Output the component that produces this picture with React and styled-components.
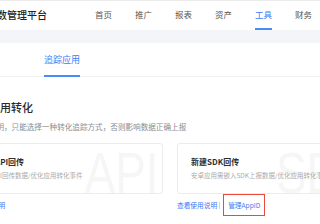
import React from 'react';
import styled, { createGlobalStyle } from 'styled-components';

const GlobalStyle = createGlobalStyle`
  html, body {
    margin: 0;
    padding: 0;
    background: #fff;
    overflow: hidden;
  }
  body {
    font-family: "Noto Sans CJK SC", "Noto Sans", sans-serif;
    color: #333;
  }
`;

const Page = styled.div`
  width: 320px;
  height: 224px;
  overflow: hidden;
`;

const Header = styled.header`
  height: 30px;
  box-sizing: border-box;
  border-top: 1px solid #ececec;
  display: flex;
  align-items: center;
  background: #fff;
`;

const Brand = styled.div`
  margin-left: -3px;
  padding-bottom: 3px;
  font-size: 10px;
  font-weight: 500;
  color: #222;
  white-space: nowrap;
`;

const Nav = styled.nav`
  display: flex;
  gap: 23px;
  margin-left: 48px;
  height: 100%;
`;

const NavItem = styled.div`
  position: relative;
  display: flex;
  align-items: center;
  padding-bottom: 3px;
  box-sizing: border-box;
  font-size: 8.5px;
  white-space: nowrap;
  color: ${(p) => (p.$active ? '#3a7cf6' : '#555')};

  &::after {
    content: '';
    display: ${(p) => (p.$active ? 'block' : 'none')};
    position: absolute;
    left: 0;
    right: 0;
    bottom: 0;
    height: 2px;
    background: #4a8cf7;
  }
`;

const Band = styled.div`
  height: 13px;
  background: #f3f5f8;
`;

const TabBar = styled.div`
  height: 34px;
  box-sizing: border-box;
  display: flex;
  border-bottom: 1px solid #eef0f2;
`;

const Tab = styled.div`
  position: relative;
  margin-left: 44px;
  display: flex;
  align-items: center;
  font-size: 9px;
  color: #3a7cf6;

  &::after {
    content: '';
    position: absolute;
    left: 0;
    right: 0;
    bottom: -1px;
    height: 2px;
    background: #4a8cf7;
  }
`;

const Content = styled.div`
  padding-top: 23px;
`;

const Title = styled.h2`
  margin: 0 0 0 -11px;
  font-size: 11px;
  line-height: 14px;
  font-weight: 500;
  color: #2b2b2b;
  white-space: nowrap;
`;

const Hint = styled.p`
  margin: 8px 0 0 -3.6px;
  font-size: 7.6px;
  line-height: 10px;
  color: #8c8c8c;
  white-space: nowrap;
`;

const Cards = styled.div`
  display: flex;
  gap: 14px;
  margin: 11px 0 0 -35px;
`;

const Column = styled.div`
  display: flex;
  flex-direction: column;
  flex: 0 0 198px;
`;

const Card = styled.div`
  position: relative;
  height: 51px;
  box-sizing: border-box;
  padding: 12px 13px 0;
  border: 1px solid #ececec;
  border-radius: 3px;
  overflow: hidden;
  background: #fff;
`;

const Watermark = styled.span`
  position: absolute;
  top: 0;
  right: 4px;
  font-family: "Liberation Sans", Arial, sans-serif;
  font-size: 58px;
  line-height: 1;
  color: #f6f6f6;
  transform: scaleX(0.79);
  transform-origin: right top;
  white-space: nowrap;
  pointer-events: none;
`;

const CardTitle = styled.div`
  position: relative;
  font-size: 8px;
  line-height: 12px;
  font-weight: 700;
  color: #2e2e2e;
  white-space: nowrap;
`;

const CardDesc = styled.div`
  position: relative;
  margin-top: 2px;
  font-size: 6.5px;
  line-height: 10px;
  color: #ababab;
  white-space: nowrap;
`;

const Links = styled.div`
  display: flex;
  align-items: center;
  height: 22px;
`;

const Link = styled.a`
  font-size: 6.7px;
  color: #3a7cf6;
  white-space: nowrap;
  text-decoration: none;
`;

const Divider = styled.span`
  width: 1px;
  height: 7px;
  margin: 0 3px 0 2px;
  background: #d6d6d6;
`;

const Marked = styled.div`
  height: 22px;
  box-sizing: border-box;
  display: flex;
  align-items: center;
  padding: 0 4px;
  border: 1.5px solid #ea4a3c;
`;

const cards = [
  {
    mark: 'API',
    title: '新建API回传',
    desc: '通过API回传数据/优化应用转化事件',
    manage: false,
  },
  {
    mark: 'SDK',
    title: '新建SDK回传',
    desc: '安卓应用需嵌入SDK上报数据/优化应用转化事件',
    manage: true,
  },
];

const navs = ['首页', '推广', '报表', '资产', '工具', '财务'];

export default function App() {
  return (
    <Page>
      <GlobalStyle />
      <Header>
        <Brand>数管理平台</Brand>
        <Nav>
          {navs.map((n) => (
            <NavItem key={n} $active={n === '工具'}>
              {n}
            </NavItem>
          ))}
        </Nav>
      </Header>
      <Band />
      <TabBar>
        <Tab>追踪应用</Tab>
      </TabBar>
      <Content>
        <Title>应用转化</Title>
        <Hint>明，只能选择一种转化追踪方式，否则影响数据正确上报</Hint>
        <Cards>
          {cards.map((c) => (
            <Column key={c.mark}>
              <Card>
                <Watermark>{c.mark}</Watermark>
                <CardTitle>{c.title}</CardTitle>
                <CardDesc>{c.desc}</CardDesc>
              </Card>
              <Links>
                <Link href="#">查看使用说明</Link>
                {c.manage && (
                  <>
                    <Divider />
                    <Marked>
                      <Link href="#">管理AppID</Link>
                    </Marked>
                  </>
                )}
              </Links>
            </Column>
          ))}
        </Cards>
      </Content>
    </Page>
  );
}
